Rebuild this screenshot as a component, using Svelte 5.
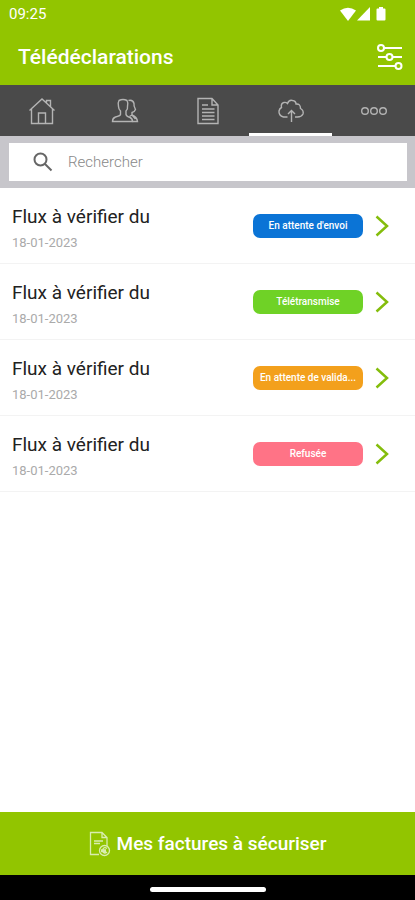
<script>
  const flux = [
    { title: 'Flux à vérifier du', date: '18-01-2023', label: "En attente d'envoi", status: 'pending' },
    { title: 'Flux à vérifier du', date: '18-01-2023', label: 'Télétransmise', status: 'sent' },
    { title: 'Flux à vérifier du', date: '18-01-2023', label: 'En attente de valida...', status: 'validation' },
    { title: 'Flux à vérifier du', date: '18-01-2023', label: 'Refusée', status: 'refused' }
  ];

  const tabs = [
    { id: 'home', name: 'Accueil' },
    { id: 'clients', name: 'Clients' },
    { id: 'documents', name: 'Documents' },
    { id: 'upload', name: 'Télédéclarations' },
    { id: 'more', name: 'Plus' }
  ];

  let active = $state('upload');
  let search = $state('');

  let visible = $derived(
    flux.filter((f) => (f.title + f.date + f.label).toLowerCase().includes(search.toLowerCase()))
  );
</script>

<div class="screen">
  <header>
    <div class="status-bar">
      <span>09:25</span>
      <svg class="status-icons" width="50" height="16" viewBox="0 0 50 16" aria-hidden="true">
        <path d="M1 4.500Q9 -1 17 4.500L9 15Z" />
        <path d="M31 1V14.500H18Z" />
        <path d="M40 1h4v1.500h1.500q1 0 1 1v10q0 1-1 1h-7q-1 0-1-1v-10q0-1 1-1h1.500z" />
      </svg>
    </div>
    <div class="title-bar">
      <h1>Télédéclarations</h1>
      <button class="filter" aria-label="Filtrer">
        <svg width="26" height="28" viewBox="0 0 26 28">
          <path d="M7 5H25M1 14H9M16 14H25M1 23H18" />
          <circle cx="4" cy="5" r="3" />
          <circle cx="12.500" cy="14" r="3" />
          <circle cx="21.500" cy="23" r="3" />
        </svg>
      </button>
    </div>
  </header>

  <nav>
    {#each tabs as tab}
      <button class="tab" class:active={active === tab.id} aria-label={tab.name} onclick={() => (active = tab.id)}>
        <svg width="28" height="28" viewBox="0 0 28 28">
          {#if tab.id === 'home'}
            <path d="M1.500 13.500L14 2L26.500 13.500M3.500 12V26.500H24.500V12M10.500 26.500V16H17.500V26.500M18.500 5.500V3.500H22.500V9.500" />
          {:else if tab.id === 'clients'}
            <path d="M8 3.500Q12 1.500 16 3.500Q17.500 6 16.500 9.500Q17 12 15 14V17.500Q15.500 19.500 19 20.500Q21.500 21.500 21.500 24.500H1.500Q1.500 21 4.500 20Q9 19 9.500 17.500V14Q7.500 12 7.500 9.500Q6.500 6 8 3.500Z" />
            <path d="M17.500 3.500Q22 2.500 23 6.500Q22.500 9 24.500 12.500Q23.500 15 21 15.500V18Q26 20 26.500 24.500H21.500M21 18L18.500 19.500M21 18L24.500 22" />
          {:else if tab.id === 'documents'}
            <path d="M4 1.500H18L24 8V26.500H4ZM18 1.500V8H24" />
            <path d="M8 8H14M8 12H20.500M8 15.500H20.500M8 19H20.500M8 22.500H20.500" />
          {:else if tab.id === 'upload'}
            <path d="M10.500 20H6.500Q1.500 18.500 2 14Q2.500 11.500 4.500 10.500Q3.500 6.500 7 5.500Q9 5 10.500 6.500Q12 2.500 15.500 3.500Q19 4 19 7Q23.500 6.500 23.500 11.500Q27 13.500 26 17Q24.500 20 20.500 20H18" />
            <path d="M14.500 25V13.500M11 17L14.500 13.500L18 17" />
          {:else}
            <circle cx="5" cy="14" r="3.300" />
            <circle cx="14" cy="14" r="3.300" />
            <circle cx="23" cy="14" r="3.300" />
          {/if}
        </svg>
      </button>
    {/each}
  </nav>

  <div class="search">
    <label class="search-box">
      <svg width="20" height="20" viewBox="0 0 20 20" aria-hidden="true">
        <circle cx="7.500" cy="7.500" r="6" />
        <path d="M12 12L18.500 18.500" />
      </svg>
      <input type="text" placeholder="Rechercher" aria-label="Rechercher" bind:value={search} />
    </label>
  </div>

  <main>
    <ul>
      {#each visible as item}
        <li>
          <button class="row">
            <span class="info">
              <span class="name">{item.title}</span>
              <span class="date">{item.date}</span>
            </span>
            <span class="badge {item.status}">{item.label}</span>
            <svg class="chevron" width="14" height="22" viewBox="0 0 14 22" aria-hidden="true">
              <path d="M1.500 1.500L12 11L1.500 20.500" />
            </svg>
          </button>
        </li>
      {/each}
    </ul>
  </main>

  <button class="secure">
    <svg width="22" height="26" viewBox="0 0 22 26" aria-hidden="true">
      <path d="M10 23.500H1.500V1.500H13L18 6.500V15M13 1.500V6.500H18M5 10H14M5 12.500H11" />
      <circle cx="15.500" cy="19.500" r="5" />
      <path d="M18 17.500Q15.500 15.500 14 18Q13 21.500 15.500 22Q17 22 18 21M12 19H17M12 20.500H17" />
    </svg>
    Mes factures à sécuriser
  </button>
  <div class="home-bar"><span></span></div>
</div>

<style>
  :global(body) {
    margin: 0;
    background: #fff;
  }
  .screen {
    min-height: 100vh;
    display: flex;
    flex-direction: column;
    font-family: Roboto, sans-serif;
  }
  button {
    border: 0;
    padding: 0;
    background: none;
    font-family: inherit;
    cursor: pointer;
  }
  svg {
    display: block;
    flex: none;
    fill: none;
  }

  header {
    background: #92c500;
    color: #fff;
  }
  .status-bar {
    display: flex;
    align-items: center;
    justify-content: space-between;
    height: 28px;
    padding: 0 26px 0 9px;
    font-size: 15px;
  }
  .status-icons {
    fill: #fff;
  }
  .title-bar {
    display: flex;
    align-items: center;
    justify-content: space-between;
    height: 57px;
    padding: 0 12px 0 18px;
  }
  h1 {
    margin: 0;
    font-size: 21px;
    font-weight: 500;
  }
  .filter svg {
    stroke: #fff;
    stroke-width: 2;
  }

  nav {
    display: flex;
    height: 51px;
    background: #4a4a4a;
  }
  .tab {
    flex: 1;
    display: flex;
    align-items: center;
    justify-content: center;
    border-top: 3px solid transparent;
    border-bottom: 3px solid transparent;
  }
  .tab.active {
    border-bottom-color: #fff;
  }
  .tab svg {
    stroke: #b4b4b4;
    stroke-width: 1.4;
  }

  .search {
    padding: 7px 8px 7px 9px;
    background: #c7c6cb;
  }
  .search-box {
    display: flex;
    align-items: center;
    gap: 15px;
    height: 38px;
    padding: 0 24px;
    background: #fff;
  }
  .search-box svg {
    stroke: #666;
    stroke-width: 2;
  }
  input {
    flex: 1;
    min-width: 0;
    border: 0;
    padding: 0;
    outline: none;
    background: none;
    font-family: inherit;
    font-size: 15px;
    font-weight: 300;
    color: #333;
  }
  input::placeholder {
    color: #888;
  }

  main {
    flex: 1;
  }
  ul {
    margin: 0;
    padding: 0;
    list-style: none;
  }
  li {
    border-bottom: 1px solid #f3f3f3;
  }
  .row {
    display: flex;
    align-items: center;
    width: 100%;
    height: 75px;
    padding: 0 26px 0 12px;
    text-align: left;
  }
  .info {
    flex: 1;
    display: flex;
    flex-direction: column;
    gap: 4px;
    padding-top: 4px;
  }
  .name {
    font-size: 19px;
    line-height: 26px;
    color: #222;
  }
  .date {
    font-size: 13px;
    line-height: 18px;
    color: #aaa;
  }
  .badge {
    box-sizing: border-box;
    width: 110px;
    padding: 0 4px;
    border-radius: 7px;
    overflow: hidden;
    text-overflow: ellipsis;
    white-space: nowrap;
    text-align: center;
    font-size: 10px;
    font-weight: 500;
    line-height: 24px;
    color: #fff;
  }
  .pending {
    background: #0b74d6;
  }
  .sent {
    background: #6fd226;
  }
  .validation {
    background: #f3a01c;
  }
  .refused {
    background: #ff7386;
  }
  .chevron {
    margin-left: 12px;
    stroke: #84bd0c;
    stroke-width: 2.5;
  }

  .secure {
    display: flex;
    align-items: center;
    justify-content: center;
    gap: 6px;
    height: 63px;
    background: #92c500;
    color: #fff;
    font-size: 19px;
    font-weight: 500;
  }
  .secure svg {
    stroke: #d9edb0;
    stroke-width: 1.3;
  }
  .home-bar {
    display: flex;
    align-items: center;
    justify-content: center;
    height: 25px;
    padding-top: 4px;
    box-sizing: border-box;
    background: #000;
  }
  .home-bar span {
    width: 116px;
    height: 5px;
    border-radius: 3px;
    background: #fff;
  }
</style>
